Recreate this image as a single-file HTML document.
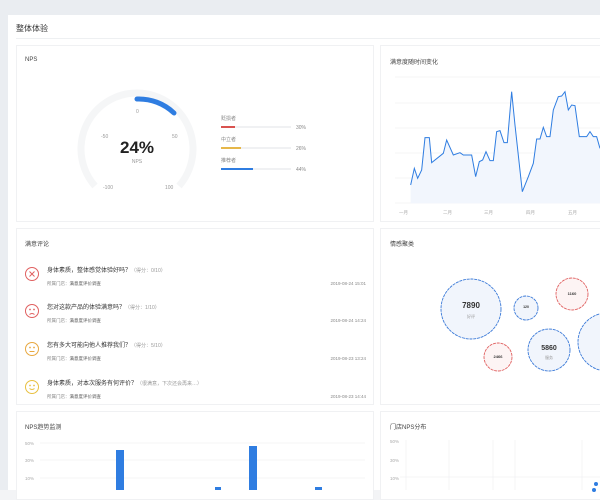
<!DOCTYPE html>
<html><head><meta charset="utf-8"><style>
*{margin:0;padding:0;box-sizing:border-box}
body{width:600px;height:500px;overflow:hidden;background:#eaedf1;font-family:"Liberation Sans","Noto Sans CJK SC",sans-serif;position:relative;color:#333}
.abs{position:absolute}
.card{position:absolute;background:#fff;border:1px solid #f0f1f3}
.t{position:absolute;font-size:7px;color:#444}
</style></head><body>
<div class="abs" style="left:8px;top:15px;width:592px;height:475px;background:#fff"></div>
<div class="abs" style="left:0;top:490px;width:600px;height:10px;background:#f3f4f6"></div>
<div class="t" style="left:16px;top:23px;font-size:8px;color:#333">整体体验</div>
<div class="abs" style="left:16px;top:38px;width:584px;height:1px;background:#eef0f2"></div>

<div class="card" style="left:16px;top:45px;width:358px;height:177px"></div>
<div class="card" style="left:380px;top:45px;width:222px;height:177px"></div>
<div class="card" style="left:16px;top:228px;width:358px;height:177px"></div>
<div class="card" style="left:380px;top:228px;width:222px;height:177px"></div>
<div class="card" style="left:16px;top:411px;width:358px;height:89px"></div>
<div class="card" style="left:380px;top:411px;width:222px;height:89px"></div>

<div class="t" style="left:25px;top:57px;font-size:6px">NPS</div>
<svg class="abs" style="left:0;top:0" width="600" height="500">
<path d="M95 186 A56 56 0 1 1 179 186" fill="none" stroke="#f5f6f7" stroke-width="7"/>
<path d="M137 99 A51 51 0 0 1 174 113" fill="none" stroke="#2f7de1" stroke-width="5" stroke-linecap="round"/>
<text x="137" y="153" font-size="17" font-weight="bold" text-anchor="middle" fill="#222" font-family="Liberation Sans">24%</text>
<text x="137" y="163" font-size="5" text-anchor="middle" fill="#999">NPS</text>
<text x="101" y="138" font-size="5" fill="#999">-50</text><text x="172" y="138" font-size="5" fill="#999">50</text>
<text x="136" y="113" font-size="5" fill="#999">0</text>
<text x="103" y="189" font-size="5" fill="#999">-100</text><text x="165" y="189" font-size="5" fill="#999">100</text>
<g font-size="5" fill="#888">
<text x="221" y="120">贬损者</text><text x="221" y="141">中立者</text><text x="221" y="162">推荐者</text>
<text x="296" y="129">30%</text><text x="296" y="150">26%</text><text x="296" y="171">44%</text></g>
<rect x="221" y="126" width="70" height="2" fill="#f0f1f3"/><rect x="221" y="126" width="14" height="2" fill="#d9534f"/>
<rect x="221" y="147" width="70" height="2" fill="#f0f1f3"/><rect x="221" y="147" width="20" height="2" fill="#e6b74a"/>
<rect x="221" y="168" width="70" height="2" fill="#f0f1f3"/><rect x="221" y="168" width="32" height="2" fill="#2f7de1"/>

<text x="390" y="64" font-size="6" fill="#444">满意度随时间变化</text>
<g stroke="#f0f1f3" stroke-width="0.7"><line x1="395" y1="77" x2="600" y2="77"/><line x1="395" y1="103" x2="600" y2="103"/><line x1="395" y1="128" x2="600" y2="128"/><line x1="395" y1="153" x2="600" y2="153"/><line x1="395" y1="178" x2="600" y2="178"/><line x1="395" y1="203" x2="600" y2="203"/></g>
<g font-size="4.5" fill="#aaa"><text x="399" y="214">一月</text><text x="443" y="214">二月</text><text x="484" y="214">三月</text><text x="526" y="214">四月</text><text x="568" y="214">五月</text></g>
<g transform="translate(380,40) scale(0.3333)">
<path d="M92 435 L103 385 L113 415 L125 390 L135 293 L148 293 L155 368 L190 340 L200 300 L220 345 L240 338 L250 345 L275 345 L287 410 L298 365 L308 360 L318 335 L330 362 L340 362 L350 275 L360 272 L372 308 L382 308 L395 155 L405 255 L427 455 L445 410 L460 370 L470 297 L480 297 L490 262 L500 290 L510 290 L520 210 L535 170 L545 168 L555 155 L565 210 L575 195 L585 197 L598 290 L610 290 L620 290 L630 275 L640 290 L650 290 L660 325 L660 490 L92 490 Z" fill="#f2f6fd"/>
<polyline points="92,435 103,385 113,415 125,390 135,293 148,293 155,368 190,340 200,300 220,345 240,338 250,345 275,345 287,410 298,365 308,360 318,335 330,362 340,362 350,275 360,272 372,308 382,308 395,155 405,255 427,455 445,410 460,370 470,297 480,297 490,262 500,290 510,290 520,210 535,170 545,168 555,155 565,210 575,195 585,197 598,290 610,290 620,290 630,275 640,290 650,290 660,325" fill="none" stroke="#2f7de1" stroke-width="1" vector-effect="non-scaling-stroke"/>
</g>

<text x="25" y="246" font-size="6" fill="#444">满意评论</text>
<g fill="none" stroke-width="1">
<g stroke="#e06060"><circle cx="32" cy="274" r="6.5"/><path d="M29.5 271.5l5 5M34.5 271.5l-5 5"/></g>
<g stroke="#e06060"><circle cx="32" cy="311" r="6.5"/><circle cx="30" cy="309.5" r="0.4"/><circle cx="34" cy="309.5" r="0.4"/><path d="M29.5 314.5q2.5-2 5 0"/></g>
<g stroke="#e8a840"><circle cx="32" cy="349" r="6.5"/><circle cx="30" cy="347.5" r="0.4"/><circle cx="34" cy="347.5" r="0.4"/><path d="M29.5 351.5h5"/></g>
<g stroke="#e8c040"><circle cx="32" cy="387" r="6.5"/><circle cx="30" cy="385.5" r="0.4"/><circle cx="34" cy="385.5" r="0.4"/><path d="M29.5 388.5q2.5 2 5 0"/></g></g>
<g font-size="6" fill="#333">
<text x="47" y="272">身体素质，整体感觉体验好吗？<tspan fill="#999" font-size="5">（得分：0/10）</tspan></text>
<text x="47" y="309">您对这款产品的体验满意吗？<tspan fill="#999" font-size="5">（得分：1/10）</tspan></text>
<text x="47" y="347">您有多大可能向他人推荐我们？<tspan fill="#999" font-size="5">（得分：5/10）</tspan></text>
<text x="47" y="385">身体素质，对本次服务有何评价？<tspan fill="#999" font-size="5">（很满意，下次还会再来…）</tspan></text></g>
<g font-size="4.5" fill="#888">
<text x="47" y="285">所属门店：<tspan fill="#555">满意度评价调查</tspan></text><text x="47" y="322">所属门店：<tspan fill="#555">满意度评价调查</tspan></text>
<text x="47" y="360">所属门店：<tspan fill="#555">满意度评价调查</tspan></text><text x="47" y="398">所属门店：<tspan fill="#555">满意度评价调查</tspan></text>
<text x="366" y="285" text-anchor="end">2019-08-24 15:01</text><text x="366" y="322" text-anchor="end">2019-08-24 14:24</text>
<text x="366" y="360" text-anchor="end">2019-08-23 13:24</text><text x="366" y="398" text-anchor="end">2019-08-23 14:44</text></g>

<text x="390" y="246" font-size="6" fill="#444">情感聚类</text>
<g fill="#f1f5fc" stroke-width="0.9" stroke-dasharray="3 0.8">
<circle cx="471" cy="309" r="30" stroke="#3b7ad8"/><circle cx="526" cy="308" r="12" stroke="#3b7ad8"/>
<circle cx="572" cy="294" r="16" stroke="#e06060" fill="#fdf4f4"/><circle cx="498" cy="357" r="14" stroke="#e06060" fill="#fdf4f4"/>
<circle cx="549" cy="350" r="21" stroke="#3b7ad8"/><circle cx="607" cy="342" r="29" stroke="#3b7ad8"/></g>
<g text-anchor="middle" font-weight="bold" fill="#333"><text x="471" y="308" font-size="8">7890</text><text x="549" y="350" font-size="7">5860</text>
<text x="526" y="308" font-size="3.5">120</text><text x="572" y="295" font-size="4">1160</text><text x="498" y="358" font-size="4">2466</text></g>
<g text-anchor="middle" fill="#999" font-size="4"><text x="471" y="318">好评</text><text x="549" y="359">服务</text></g>

<text x="25" y="429" font-size="6" fill="#444">NPS趋势监测</text>
<g stroke="#f0f1f3" stroke-width="0.7"><line x1="40" y1="443" x2="365" y2="443"/><line x1="40" y1="460" x2="365" y2="460"/><line x1="40" y1="478" x2="365" y2="478"/></g>
<g font-size="4.5" fill="#aaa"><text x="25" y="445">50%</text><text x="25" y="462">30%</text><text x="25" y="480">10%</text></g>
<g fill="#2f7de1"><rect x="116" y="450" width="8" height="40"/><rect x="215" y="487" width="6" height="3"/><rect x="249" y="446" width="8" height="44"/><rect x="315" y="487" width="7" height="3"/></g>

<text x="390" y="429" font-size="6" fill="#444">门店NPS分布</text>
<g stroke="#f0f1f3" stroke-width="0.7"><line x1="406" y1="440" x2="406" y2="490"/><line x1="449" y1="440" x2="449" y2="490"/><line x1="493" y1="440" x2="493" y2="490"/><line x1="515" y1="440" x2="515" y2="490"/><line x1="582" y1="440" x2="582" y2="490"/><line x1="400" y1="477" x2="600" y2="477"/></g>
<g font-size="4.5" fill="#aaa"><text x="390" y="443">50%</text><text x="390" y="462">30%</text><text x="390" y="480">10%</text></g>
<circle cx="596" cy="484" r="2" fill="#2f7de1"/><circle cx="594" cy="490" r="2" fill="#2f7de1"/>
</svg>
</body></html>
